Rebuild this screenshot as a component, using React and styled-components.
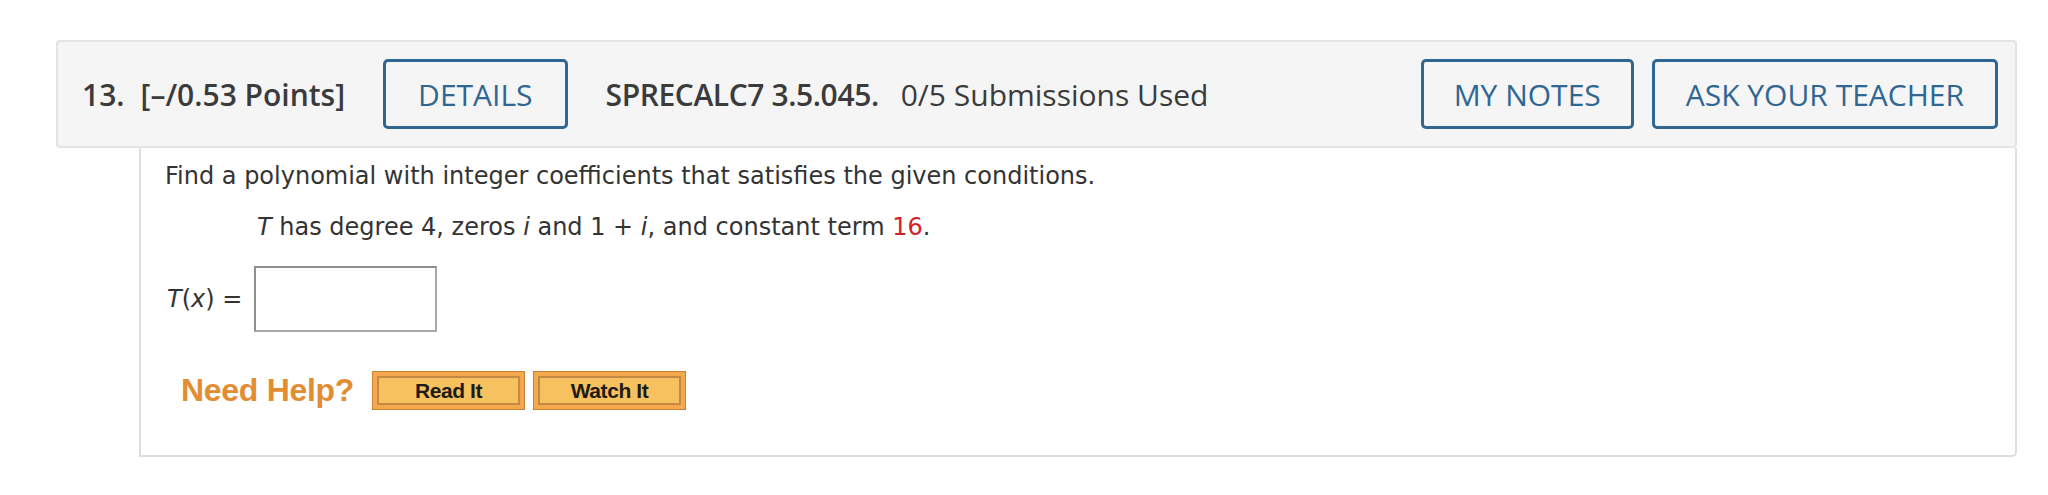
import React from "react";
import styled, { createGlobalStyle } from "styled-components";

const GlobalStyle = createGlobalStyle`
  html, body {
    margin: 0;
    padding: 0;
    background: #ffffff;
  }
`;

const Page = styled.div`
  width: 2048px;
  height: 495px;
  box-sizing: border-box;
  padding: 40px 31px 0 56px;
  background: #ffffff;
`;

const Header = styled.div`
  height: 108px;
  box-sizing: border-box;
  display: flex;
  align-items: center;
  padding: 0 17px 0 24px;
  background: #f5f5f5;
  border: 2px solid #e3e3e3;
  border-radius: 4px;
  font-family: "Open Sans", "Liberation Sans", sans-serif;
  color: #3b3b3b;
`;

const Number = styled.span`
  font-size: 30px;
  font-weight: 600;
  margin-right: 16px;
`;

const Points = styled.span`
  font-size: 30px;
  font-weight: 600;
  margin-right: 38px;
`;

const OutlineButton = styled.button`
  height: 70px;
  box-sizing: border-box;
  padding: 0 ${(p) => p.$pad}px;
  margin-left: ${(p) => p.$gap || 0}px;
  background: transparent;
  border: 3px solid #2f6692;
  border-radius: 5px;
  font-family: "Open Sans", "Liberation Sans", sans-serif;
  font-size: 30px;
  color: #2f6692;
  cursor: pointer;
`;

const Code = styled.span`
  font-size: 30px;
  font-weight: 600;
  margin-left: 38px;
  letter-spacing: -0.4px;
`;

const Used = styled.span`
  font-size: 30px;
  margin-left: 22px;
`;

const Spacer = styled.div`
  flex: 1;
`;

const Body = styled.div`
  margin-left: 83px;
  height: 309px;
  box-sizing: border-box;
  border: 2px solid #dedede;
  border-top: none;
  border-radius: 0 0 5px 0;
  padding: 14px 0 0 24px;
  font-family: "DejaVu Sans", Verdana, sans-serif;
  font-size: 24px;
  color: #333333;
`;

const Line = styled.div`
  line-height: 28px;
  margin-left: ${(p) => p.$indent || 0}px;
  margin-bottom: ${(p) => p.$after || 0}px;
`;

const Red = styled.span`
  color: #d0212a;
`;

const AnswerRow = styled.div`
  display: flex;
  align-items: center;
  margin-left: 2px;
`;

const AnswerLabel = styled.span`
  margin-right: 12px;
`;

const Input = styled.input`
  width: 183px;
  height: 66px;
  box-sizing: border-box;
  border: 2px solid #a9a9a9;
  border-top-color: #8e8e8e;
  border-left-color: #8e8e8e;
  background: #fff;
  margin: 0;
`;

const HelpRow = styled.div`
  display: flex;
  align-items: center;
  margin: 39px 0 0 16px;
`;

const NeedHelp = styled.span`
  font-family: "Liberation Sans", Arial, sans-serif;
  font-weight: 700;
  font-size: 32px;
  color: #e38d33;
  margin-right: 18px;
  letter-spacing: -0.3px;
`;

const HelpButton = styled.button`
  width: 153px;
  height: 39px;
  box-sizing: border-box;
  padding: 4px;
  margin-right: 8px;
  background: #f3a94c;
  border: 1px solid #c88134;
  cursor: pointer;
  display: flex;
`;

const HelpInner = styled.span`
  flex: 1;
  display: flex;
  align-items: center;
  justify-content: center;
  background: #f6c15e;
  border: 2px solid #c48a44;
  font-family: "Liberation Sans", Arial, sans-serif;
  font-weight: 700;
  font-size: 21px;
  letter-spacing: -0.4px;
  color: #1d1b17;
`;

export default function App() {
  return (
    <>
      <GlobalStyle />
      <Page>
        <Header>
          <Number>13.</Number>
          <Points>[–/0.53 Points]</Points>
          <OutlineButton $pad={32}>DETAILS</OutlineButton>
          <Code>SPRECALC7 3.5.045.</Code>
          <Used>0/5 Submissions Used</Used>
          <Spacer />
          <OutlineButton $pad={30}>MY NOTES</OutlineButton>
          <OutlineButton $pad={31} $gap={18}>
            ASK YOUR TEACHER
          </OutlineButton>
        </Header>
        <Body>
          <Line $after={23}>
            Find a polynomial with integer coefficients that satisfies the given conditions.
          </Line>
          <Line $indent={92} $after={25}>
            <i>T</i> has degree 4, zeros <i>i</i> and 1 + <i>i</i>, and constant term <Red>16</Red>.
          </Line>
          <AnswerRow>
            <AnswerLabel>
              <i>T</i>(<i>x</i>) =
            </AnswerLabel>
            <Input type="text" />
          </AnswerRow>
          <HelpRow>
            <NeedHelp>Need Help?</NeedHelp>
            <HelpButton>
              <HelpInner>Read It</HelpInner>
            </HelpButton>
            <HelpButton>
              <HelpInner>Watch It</HelpInner>
            </HelpButton>
          </HelpRow>
        </Body>
      </Page>
    </>
  );
}
